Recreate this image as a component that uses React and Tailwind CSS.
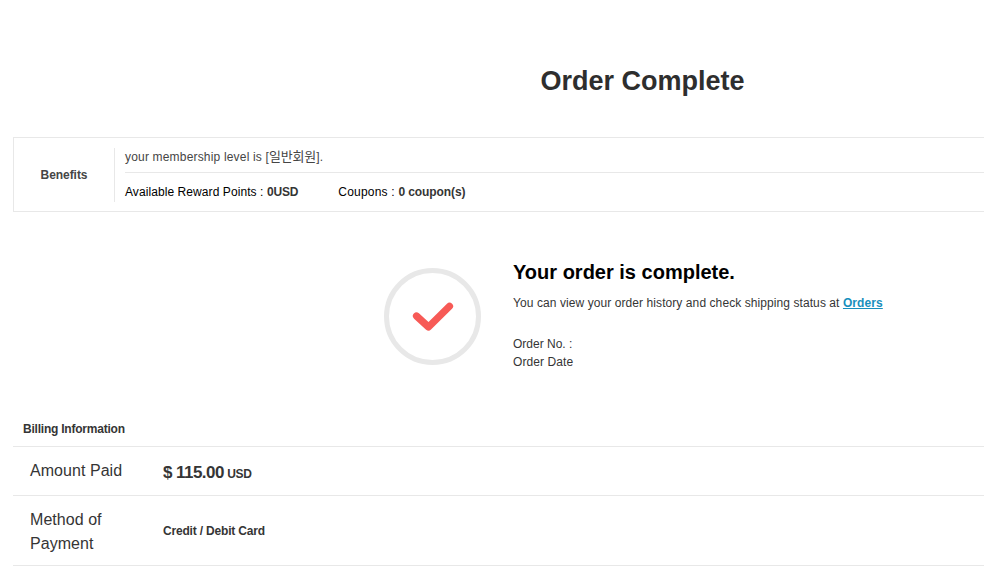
import React from 'react';

const Row = ({ label, children }) => (
  <div className="flex items-center border-b border-[#e8e8e8]">
    <div className="w-[150px] shrink-0 pl-[17px] pr-8 text-[16px] leading-6 tracking-[0.05px]">{label}</div>
    <div>{children}</div>
  </div>
);

const App = () => {
  return (
    <div className="h-[588px] w-full overflow-hidden bg-white pl-[13px] font-['Liberation_Sans','Noto_Sans_CJK_KR',sans-serif] text-[12px] text-[#353535]">
      <div className="flex w-[1259px] flex-col">
        <h1 className="pt-[62px] text-center text-[27px] leading-[38px] font-bold text-[#2e2e2e]">Order Complete</h1>

        {/* Benefits */}
        <section className="mt-[37px] flex h-[75px] items-center border border-[#e8e8e8]">
          <strong className="w-[100px] text-center leading-[18px] tracking-[-0.05px] text-[#454545]">Benefits</strong>
          <div className="flex h-[54px] flex-1 flex-col border-l border-[#e8e8e8] pl-[10px]">
            <p className="h-[25px] border-b border-[#e8e8e8] leading-[18px] tracking-[0.18px] text-[#454545]">
              your membership level is [<span className="text-[13px] leading-none tracking-[-0.2px]">일반회원</span>].
            </p>
            <div className="flex gap-10 pt-[10px] leading-[18px] text-black">
              <p className="tracking-[0.08px]">Available Reward Points : <strong className="tracking-[-0.15px] text-[#353535]">0USD</strong></p>
              <p className="tracking-[0.2px]">Coupons : <strong className="tracking-[-0.08px] text-[#353535]">0 coupon(s)</strong></p>
            </div>
          </div>
        </section>

        <section className="mt-[46px] flex h-[118px] pl-[370px]">
          <svg width="100" height="100" viewBox="0 0 100 100" fill="none" className="mt-[9px] shrink-0">
            <circle cx="49.5" cy="49.5" r="46" stroke="#e8e8e8" strokeWidth="5" />
            <path d="M33.500 49L45.500 60L66.500 39.300" stroke="#f75a56" strokeWidth="7.200" strokeLinecap="round" strokeLinejoin="round" />
          </svg>
          <div className="ml-[30px]">
            <h2 className="text-[20px] leading-7 font-bold text-black">Your order is complete.</h2>
            <p className="mt-2 leading-[18px] tracking-[0.08px]">
              You can view your order history and check shipping status at <a href="#" className="font-bold text-[#198fbd] underline">Orders</a>
            </p>
            <p className="mt-[23px] leading-[18px]">Order No. :</p>
            <p className="leading-[18px] tracking-[0.08px]">Order Date</p>
          </div>
        </section>

        {/* Billing */}
        <section className="mt-[44px]">
          <h3 className="h-[27px] border-b border-[#e8e8e8] pl-[10px] leading-[18px] font-bold tracking-[-0.22px]">Billing Information</h3>
          <div className="[&>div]:h-[49px]">
            <Row label="Amount Paid">
              <div className="flex items-baseline gap-[3.5px] pt-[3px]">
                <strong className="text-[17px] leading-6 tracking-[-0.55px]">$ 115.00</strong>
                <strong className="text-[12px] tracking-[-0.4px]">USD</strong>
              </div>
            </Row>
          </div>
          <div className="[&>div]:h-[70px] [&>div>div:first-child]:pt-0.5">
            <Row label="Method of Payment">
              <strong className="tracking-[-0.18px]">Credit / Debit Card</strong>
            </Row>
          </div>
        </section>
      </div>
    </div>
  );
};

export default App;
